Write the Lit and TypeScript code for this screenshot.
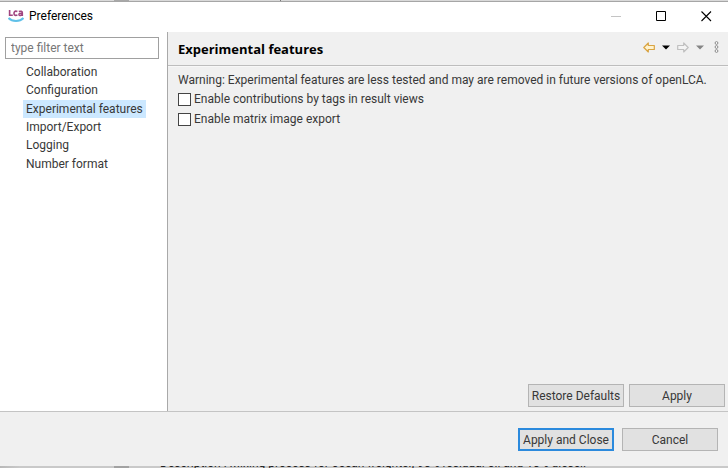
import { LitElement, html, css } from "lit";
import { customElement, state } from "lit/decorators.js";
import { classMap } from "lit/directives/class-map.js";

const PAGES = [
  "Collaboration",
  "Configuration",
  "Experimental features",
  "Import/Export",
  "Logging",
  "Number format",
];

@customElement("app-root")
export class AppRoot extends LitElement {
  @state() private selected = "Experimental features";

  static styles = css`
    :host {
      display: flex;
      flex-direction: column;
      min-height: 100vh;
      font-family: Roboto, "Noto Sans", sans-serif;
      font-size: 12px;
      line-height: 18px;
      color: #383838;
      background: #f0f0f0;
    }
    * {
      box-sizing: border-box;
    }
    button,
    input {
      font: inherit;
      color: inherit;
      margin: 0;
    }
    button {
      padding: 0;
      white-space: nowrap;
    }
    svg {
      display: block;
      flex: none;
    }
    .behind {
      display: flex;
      align-items: flex-end;
      overflow: hidden;
      flex: none;
      white-space: nowrap;
      color: #222;
    }
    .behind.top {
      height: 2px;
      background: linear-gradient(90deg, #d9d9d9 114px, #a8a8a8 114px 129px, #d9d9d9 129px 280px, #777 280px 281px, #d9d9d9 281px);
      border-bottom: 1px solid #a6a6a6;
    }
    .behind.bottom {
      height: 2px;
      padding-left: 160px;
      background: linear-gradient(90deg, #b8b8b8, #c9c9c9 20px 114px, #a2a2a2 114px 129px, #c9c9c9 129px);
    }
    .behind p {
      margin: 0 0 -3px;
      line-height: 16px;
    }
    .titlebar {
      display: flex;
      align-items: center;
      flex: none;
      height: 30px;
      padding: 0 16px 2px 8px;
      background: #fff;
      color: #000;
    }
    .titlebar h1 {
      flex: 1;
      margin: 0 0 0 5px;
      font-size: 12px;
      font-weight: 400;
    }
    .window-buttons {
      display: flex;
      gap: 34px;
    }
    .icon-button {
      border: 0;
      background: none;
    }
    .main {
      display: flex;
      flex: 1;
    }
    .sidebar {
      flex: none;
      width: 168px;
      padding: 5px 8px 0 5px;
      background: #fff;
      border-right: 1px solid #a9a9a9;
    }
    .filter {
      display: block;
      width: 100%;
      height: 22px;
      padding: 0 5px;
      border: 1px solid #a0a0a0;
      border-radius: 0;
      background: #fff;
      outline: none;
    }
    .filter::placeholder {
      color: #777;
      opacity: 1;
    }
    .pages {
      display: grid;
      grid-auto-rows: 1fr;
      height: 110px;
      list-style: none;
      margin: 4px 0 0;
      padding: 0 0 0 18px;
    }
    .pages li {
      display: flex;
    }
    .page {
      padding: 0 3px;
      border: 0;
      background: none;
      line-height: 18px;
    }
    .page.selected {
      background: #cce8ff;
    }
    .content {
      display: flex;
      flex-direction: column;
      flex: 1;
      min-width: 0;
    }
    .header {
      display: flex;
      align-items: center;
      height: 34px;
      padding: 0 8px 0 10px;
      border-bottom: 1px solid #bdbdbd;
      box-shadow: 0 1px #f7f7f7;
    }
    .header h2 {
      flex: 1;
      margin: 0;
      font-family: "Open Sans", "Noto Sans", sans-serif;
      font-size: 13px;
      color: #000;
    }
    .history {
      display: flex;
      align-items: center;
      gap: 7px;
      padding-bottom: 3px;
    }
    .settings {
      flex: 1;
      padding: 5px 10px;
    }
    .settings p {
      margin: 0;
      line-height: 18px;
      white-space: nowrap;
    }
    .option {
      display: flex;
      align-items: center;
      gap: 3px;
      height: 20px;
    }
    .option input {
      appearance: none;
      width: 13px;
      height: 13px;
      border: 1px solid #444;
      border-radius: 0;
      background: #fff;
    }
    .option input:checked {
      background: #333;
      box-shadow: inset 0 0 0 2px #fff;
    }
    .actions {
      display: flex;
      justify-content: flex-end;
      gap: 5px;
      padding: 0 3px 4px;
    }
    .push {
      width: 96px;
      height: 23px;
      border: 1px solid #b4b4b4;
      border-radius: 0;
      background: #e1e1e1;
    }
    .push.default {
      border: 2px solid #2b8add;
    }
    .footer {
      display: flex;
      justify-content: flex-end;
      gap: 8px;
      flex: none;
      padding: 16px 10px 15px;
      border-top: 1px solid #c4c4c4;
    }
  `;

  render() {
    return html`
      <div class="behind top"></div>
      <header class="titlebar">
        <svg width="16" height="14" viewBox="0 0 16 14" fill="none" aria-hidden="true">
          <g stroke="#a0457f" stroke-width="1.6">
            <path d="M1.6 1V6.3H4.8" />
            <path d="M9.4 2.5C6.6 1.5 6 3 6 4.4C6 6.6 7.8 6.7 9.4 6.1" />
            <path d="M10.8 2.6C12.8 1.8 14.3 2.2 14.3 3.7V7M14.2 4.4C12 4.1 10.8 4.8 11 5.7C11.3 6.9 13.5 6.6 14.3 5.4" />
          </g>
          <path d="M.5 9C4 13 12 13 15.5 9" stroke="#5fc0e8" stroke-width="2" />
        </svg>
        <h1>Preferences</h1>
        <div class="window-buttons">
          <button class="icon-button" aria-label="Minimize">
            <svg width="11" height="11" viewBox="0 0 11 11"><path d="M0 5.5H10" stroke="#c4c4c4" /></svg>
          </button>
          <button class="icon-button" aria-label="Maximize">
            <svg width="11" height="11" viewBox="0 0 11 11"><path d="M.5 .5H9.5V9.5H.5Z" fill="none" stroke="#000" /></svg>
          </button>
          <button class="icon-button" aria-label="Close">
            <svg width="11" height="11" viewBox="0 0 11 11"><path d="M.5 .5L10 10M10 .5L.5 10" stroke="#000" stroke-width="1.1" /></svg>
          </button>
        </div>
      </header>
      <div class="main">
        <nav class="sidebar">
          <input class="filter" type="text" placeholder="type filter text" aria-label="Filter preferences" />
          <ul class="pages">
            ${PAGES.map(
              (name) => html`<li>
                <button
                  class=${classMap({ page: true, selected: name === this.selected })}
                  @click=${() => (this.selected = name)}
                >${name}</button>
              </li>`
            )}
          </ul>
        </nav>
        <main class="content">
          <div class="header">
            <h2>${this.selected}</h2>
            <div class="history">
              <button class="icon-button" aria-label="Back">
                <svg width="12" height="11" viewBox="0 0 12 11">
                  <path d="M.8 5.5L5.3 1V3.5H11.3V7.5H5.3V10Z" fill="#fff3cf" stroke="#d9a443" stroke-width="1.2" stroke-linejoin="round" />
                </svg>
              </button>
              <button class="icon-button" aria-label="Back history">
                <svg width="8" height="5" viewBox="0 0 8 5"><path d="M0 .5H8L4 4.5Z" fill="#000" /></svg>
              </button>
              <button class="icon-button" aria-label="Forward">
                <svg width="12" height="11" viewBox="0 0 12 11">
                  <path d="M11.2 5.5L6.7 1V3.5H.7V7.5H6.7V10Z" fill="#f4f4f4" stroke="#c0c0c0" stroke-width="1.2" stroke-linejoin="round" />
                </svg>
              </button>
              <button class="icon-button" aria-label="Forward history">
                <svg width="8" height="5" viewBox="0 0 8 5"><path d="M0 .5H8L4 4.5Z" fill="#858585" /></svg>
              </button>
              <button class="icon-button" aria-label="View menu">
                <svg width="9" height="12" viewBox="0 0 9 12" fill="#fff" stroke="#8a8a8a">
                  <circle cx="5.5" cy="2" r="1.4" /><circle cx="5.5" cy="6" r="1.4" /><circle cx="5.5" cy="10" r="1.4" />
                </svg>
              </button>
            </div>
          </div>
          <div class="settings">
            <p>Warning: Experimental features are less tested and may are removed in future versions of openLCA.</p>
            <label class="option"><input type="checkbox" />Enable contributions by tags in result views</label>
            <label class="option"><input type="checkbox" />Enable matrix image export</label>
          </div>
          <div class="actions">
            <button class="push">Restore Defaults</button>
            <button class="push">Apply</button>
          </div>
        </main>
      </div>
      <footer class="footer">
        <button class="push default">Apply and Close</button>
        <button class="push">Cancel</button>
      </footer>
      <div class="behind bottom">
        <p>Description : Mixing process for ocean freighter, 90% residual oil and 10% diesel.</p>
      </div>
    `;
  }
}
